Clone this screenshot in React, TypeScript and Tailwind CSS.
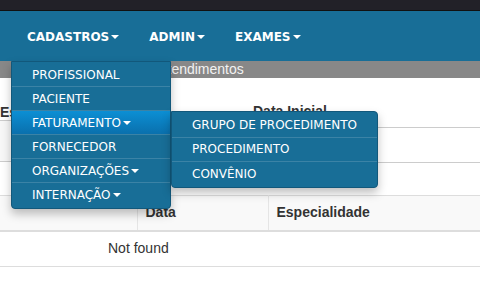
import React from 'react';

const Caret = () => (
  <span className="inline-block ml-[2px] align-middle w-0 h-0 border-x-[4px] border-x-transparent border-t-[4px] border-t-white" />
);

const menuItems = [
  { label: 'PROFISSIONAL' },
  { label: 'PACIENTE' },
  { label: 'FATURAMENTO', sub: true, active: true },
  { label: 'FORNECEDOR' },
  { label: 'ORGANIZAÇÕES', sub: true },
  { label: 'INTERNAÇÃO', sub: true },
];

const subItems = ['GRUPO DE PROCEDIMENTO', 'PROCEDIMENTO', 'CONVÊNIO'];

const App: React.FC = () => {
  return (
    <div className="w-[480px] h-[300px] overflow-hidden bg-white relative font-['Liberation_Sans',Arial,sans-serif] text-[#333]">
      <div className="h-[11px] bg-[#222128] border-b border-[#111]" />

      <nav className="h-[50px] bg-[#186e97] flex items-center pl-[12px] pt-[2px] relative z-10 font-['DejaVu_Sans',sans-serif] text-[12px] font-bold text-white">
        <a className="px-[15px] flex items-center">CADASTROS<Caret /></a>
        <a className="px-[15px] flex items-center">ADMIN<Caret /></a>
        <a className="px-[15px] flex items-center">EXAMES<Caret /></a>

        {/* dropdown */}
        <div className="absolute top-[50px] left-[11px] w-[160px] bg-[#186e97] border border-[#12587b] rounded-b-[4px] shadow-[0_5px_10px_rgba(0,0,0,0.25)] font-normal pt-[1px] pb-[1px]">
          {menuItems.map((item, i) => (
            <div
              key={item.label}
              className={
                'h-[24px] flex items-center pl-[20px] ' +
                (i < menuItems.length - 1 ? 'border-b border-[#3b83a6] ' : '') +
                (item.active ? 'bg-gradient-to-b from-[#0c8fd4] to-[#0a70ad]' : '')
              }
            >
              {item.label}
              {item.sub && <Caret />}
            </div>
          ))}

          {/* submenu */}
          <div className="absolute top-[49px] left-[159px] w-[207px] bg-[#186e97] border border-[#12587b] rounded-r-[4px] rounded-bl-[4px] shadow-[0_5px_10px_rgba(0,0,0,0.25)] pt-[1px]">
            {subItems.map((s, i) => (
              <div
                key={s}
                className={
                  'h-[24.5px] flex items-center pl-[20px] ' +
                  (i < subItems.length - 1 ? 'border-b border-[#3b83a6]' : '')
                }
              >
                {s}
              </div>
            ))}
          </div>
        </div>
      </nav>

      <div className="h-[17px] bg-[#888888] text-[#f2f2f2] text-[14px] leading-[17px] pl-[106px]">
        Lista de Atendimentos
      </div>

      {/* filtros */}
      <div className="flex pt-[24px]">
        <div className="w-[240px]">
          <div className="text-[14px] font-bold leading-[16px] pt-[2px]">Especialidade</div>
          <div className="h-[42px] border-y border-[#ccc] bg-[#f7f7f7]" />
        </div>
        <div className="ml-[13px] flex-1">
          <div className="text-[14px] font-bold leading-[16px] pt-[1px]">Data Inicial</div>
          <div className="mt-[8px] h-[36px] border border-[#ccc] rounded-[4px] -mr-[10px]" />
        </div>
      </div>

      {/* tabela */}
      <table className="mt-[32px] w-[480px] border-collapse text-[14px]">
        <thead>
          <tr className="h-[35px] bg-[#f9f9f9] border-t border-[#ddd] border-b-2 border-b-[#ddd]">
            <th className="w-[137px] border-r border-[#e5e5e5]" />
            <th className="w-[131px] border-r border-[#e5e5e5] text-left pl-[8px] font-bold">Data</th>
            <th className="text-left pl-[8px] font-bold">Especialidade</th>
          </tr>
        </thead>
        <tbody>
          <tr className="h-[36px] border-b border-[#ddd]">
            <td colSpan={3} className="pl-[108px]">Not found</td>
          </tr>
        </tbody>
      </table>
    </div>
  );
};

export default App;
